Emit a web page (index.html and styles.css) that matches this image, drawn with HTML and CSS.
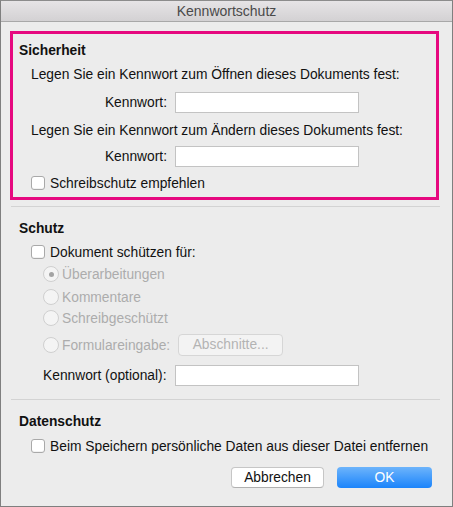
FILE: index.html
```html
<!DOCTYPE html>
<html lang="de">
<head>
<meta charset="utf-8">
<title>Kennwortschutz</title>
<link rel="stylesheet" href="styles.css">
</head>
<body>
<div class="window">
  <div class="titlebar">Kennwortschutz</div>
  <div class="content">
    <section class="highlight">
      <div class="heading">Sicherheit</div>
      <div class="line p1">Legen Sie ein Kennwort zum Öffnen dieses Dokuments fest:</div>
      <div class="field-row r1"><span class="label">Kennwort:</span><span class="input"></span></div>
      <div class="line p2">Legen Sie ein Kennwort zum Ändern dieses Dokuments fest:</div>
      <div class="field-row r2"><span class="label">Kennwort:</span><span class="input"></span></div>
      <div class="check-row c1"><span class="checkbox"></span><span>Schreibschutz empfehlen</span></div>
    </section>
    <div class="sep s1"></div>
    <section class="schutz">
      <div class="heading">Schutz</div>
      <div class="check-row c2"><span class="checkbox"></span><span>Dokument schützen für:</span></div>
      <div class="radio-row rr1 disabled"><span class="radio checked"></span><span>Überarbeitungen</span></div>
      <div class="radio-row rr2 disabled"><span class="radio"></span><span>Kommentare</span></div>
      <div class="radio-row rr3 disabled"><span class="radio"></span><span>Schreibgeschützt</span></div>
      <div class="radio-row rr4 disabled"><span class="radio"></span><span class="form-label">Formulareingabe:</span><span class="btn-disabled">Abschnitte...</span></div>
      <div class="opt-row"><span class="opt-label">Kennwort (optional):</span><span class="input"></span></div>
    </section>
    <div class="sep s2"></div>
    <section class="daten">
      <div class="heading">Datenschutz</div>
      <div class="check-row c3"><span class="checkbox"></span><span>Beim Speichern persönliche Daten aus dieser Datei entfernen</span></div>
      <div class="buttons">
        <span class="btn cancel">Abbrechen</span>
        <span class="btn ok">OK</span>
      </div>
    </section>
  </div>
</div>
</body>
</html>
```
FILE: styles.css
```css
html, body {
  margin: 0;
  padding: 0;
  background: #ececec;
}
body {
  font-family: "Liberation Sans", Arial, sans-serif;
  font-size: 13.8px;
  color: #111;
}
.window {
  width: 453px;
  height: 507px;
  box-sizing: border-box;
  border: 1px solid #7f7f7f;
  border-top: 1px solid #8c8c8c;
  background: #ececec;
  display: flex;
  flex-direction: column;
}
.titlebar {
  height: 20px;
  line-height: 21px;
  text-align: center;
  font-size: 14px;
  color: #4a4a4a;
  background: linear-gradient(to bottom, #e6e4e6, #d3d1d3);
  border-bottom: 1px solid #a8a8a8;
}
.content {
  display: flex;
  flex-direction: column;
  padding-left: 9px;
}
.highlight {
  box-sizing: border-box;
  margin-top: 9px;
  width: 429px;
  height: 169px;
  border: 3px solid #e6097f;
  display: flex;
  flex-direction: column;
  padding-left: 6px;
}
.heading {
  font-weight: bold;
  height: 16px;
  line-height: 16px;
}
.highlight .heading { margin-top: 9px; }
.line {
  height: 16px;
  line-height: 16px;
  padding-left: 12px;
}
.p1 { margin-top: 8px; }
.p2 { margin-top: 10px; }
.field-row {
  display: flex;
  align-items: center;
  height: 21px;
}
.r1 { margin-top: 9px; }
.r2 { margin-top: 7px; }
.field-row .label {
  width: 148px;
  text-align: right;
  padding-right: 8px;
}
.input {
  display: block;
  width: 182px;
  height: 19px;
  background: #fff;
  border: 1px solid #c3c3c3;
}
.check-row {
  display: flex;
  align-items: center;
  height: 16px;
  padding-left: 12px;
}
.c1 { margin-top: 8px; }
.checkbox {
  display: block;
  width: 12px;
  height: 12px;
  border: 1px solid #a9a9a9;
  border-radius: 3px;
  background: #fff;
  margin-right: 5px;
  box-shadow: inset 0 -1px 0 #f2f2f2;
}
.sep {
  height: 1px;
  background: #d3d3d3;
  width: 429px;
  margin-left: 1px;
}
.s1 { margin-top: 6px; }
.schutz {
  display: flex;
  flex-direction: column;
  padding-left: 9px;
}
.schutz .heading { margin-top: 14px; }
.c2 { margin-top: 7px; }
.radio-row {
  display: flex;
  align-items: center;
  height: 16px;
  padding-left: 24px;
  color: #acacac;
}
.rr1 { margin-top: 6px; }
.rr2 { margin-top: 7px; }
.rr3 { margin-top: 5px; }
.rr4 { margin-top: 8px; height: 22px; }
.radio {
  display: block;
  width: 14px;
  height: 14px;
  border: 1px solid #cfcfcf;
  border-radius: 50%;
  background: #f4f4f4;
  margin-right: 3px;
  position: relative;
}
.radio.checked::after {
  content: "";
  position: absolute;
  left: 4.5px;
  top: 4.5px;
  width: 5px;
  height: 5px;
  border-radius: 50%;
  background: #a3a3a3;
}
.form-label { margin-right: 8px; }
.btn-disabled {
  display: block;
  width: 103px;
  height: 20px;
  line-height: 20px;
  text-align: center;
  border: 1px solid #d6d6d6;
  border-radius: 4px;
  background: #f3f3f3;
  color: #b3b3b3;
}
.opt-row {
  display: flex;
  align-items: center;
  height: 21px;
  margin-top: 9px;
  padding-left: 24px;
}
.opt-label {
  width: 132px;
}
.s2 { margin-top: 13px; }
.daten {
  display: flex;
  flex-direction: column;
  padding-left: 9px;
}
.daten .heading { margin-top: 14px; }
.c3 { margin-top: 8px; }
.buttons {
  display: flex;
  justify-content: flex-end;
  gap: 13px;
  margin-top: 13px;
  padding-right: 20px;
}
.btn {
  display: block;
  height: 19px;
  line-height: 19px;
  text-align: center;
  border-radius: 4px;
}
.cancel {
  width: 91px;
  background: #fff;
  border: 1px solid #c6c6c6;
  border-bottom-color: #b0b0b0;
}
.ok {
  width: 95px;
  height: 21px;
  line-height: 21px;
  color: #fff;
  background: linear-gradient(to bottom, #6db4fb, #1b84fb);
}
```
